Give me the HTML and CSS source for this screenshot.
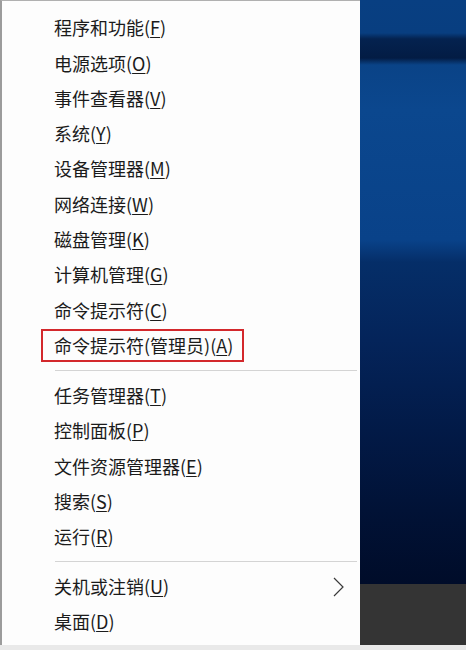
FILE: index.html
```html
<!DOCTYPE html>
<html lang="zh-CN">
<head>
<meta charset="utf-8">
<title>Win+X 菜单</title>
<link rel="stylesheet" href="styles.css">
</head>
<body>
<div class="screen">
  <nav class="menu">
    <div class="item">程序和功能(<u>F</u>)</div>
    <div class="item">电源选项(<u>O</u>)</div>
    <div class="item">事件查看器(<u>V</u>)</div>
    <div class="item">系统(<u>Y</u>)</div>
    <div class="item">设备管理器(<u>M</u>)</div>
    <div class="item">网络连接(<u>W</u>)</div>
    <div class="item">磁盘管理(<u>K</u>)</div>
    <div class="item">计算机管理(<u>G</u>)</div>
    <div class="item">命令提示符(<u>C</u>)</div>
    <div class="item"><span class="mark">命令提示符(管理员)(<u>A</u>)</span></div>
    <div class="sep"></div>
    <div class="item">任务管理器(<u>T</u>)</div>
    <div class="item">控制面板(<u>P</u>)</div>
    <div class="item">文件资源管理器(<u>E</u>)</div>
    <div class="item">搜索(<u>S</u>)</div>
    <div class="item">运行(<u>R</u>)</div>
    <div class="sep"></div>
    <div class="item sub"><span>关机或注销(<u>U</u>)</span>
      <svg class="chev" width="11" height="20" viewBox="0 0 11 20"><path d="M1 1 L10 10 L1 19" fill="none" stroke="#3a3a3a" stroke-width="1.2"/></svg>
    </div>
    <div class="item">桌面(<u>D</u>)</div>
  </nav>
  <div class="desktop">
    <div class="wallpaper"></div>
    <div class="taskbar"></div>
  </div>
</div>
<div class="strip"></div>
</body>
</html>
```
FILE: styles.css
```css
html, body {
  margin: 0;
  padding: 0;
}
body {
  width: 466px;
  height: 650px;
  overflow: hidden;
  display: flex;
  flex-direction: column;
  background: #e9e9e9;
  font-family: "Noto Sans CJK SC", "Noto Sans", sans-serif;
}
.screen {
  height: 645px;
  display: flex;
}
.menu {
  box-sizing: border-box;
  width: 360px;
  background: #fdfdfd;
  border-left: 2px solid #9c9c9c;
  border-top: 1px solid #b0b0b0;
  padding-top: 9.3px;
  display: flex;
  flex-direction: column;
}
.item {
  height: 35.3px;
  line-height: 35.3px;
  padding-left: 52px;
  padding-right: 16px;
  font-size: 18px;
  color: #1b1b1b;
  white-space: nowrap;
  display: flex;
  align-items: center;
}
.item u {
  text-decoration: underline;
  text-decoration-thickness: 1px;
  text-underline-offset: 2px;
}
.mark {
  display: inline-block;
  box-sizing: border-box;
  height: 33px;
  line-height: 29px;
  margin-left: -13px;
  padding: 0 9px 0 11px;
  border: 2px solid #d3282c;
}
.sep {
  height: 1px;
  background: #d4d4d4;
  margin: 7px 3px 6.7px 53px;
}
.sub {
  justify-content: space-between;
}
.chev {
  display: block;
}
.desktop {
  flex: 1;
  display: flex;
  flex-direction: column;
}
.wallpaper {
  flex: 1;
  background: linear-gradient(to bottom,
    #083f82 0px,
    #083e80 33px,
    #04224f 39px,
    #031c44 58px,
    #0a4387 65px,
    #0b478e 110px,
    #094289 240px,
    #052e68 262px,
    #04245a 340px,
    #021a47 430px,
    #011236 510px,
    #000c29 584px);
}
.taskbar {
  height: 61px;
  background: #343434;
}
.strip {
  height: 5px;
  background: #e9e9e9;
}
```
